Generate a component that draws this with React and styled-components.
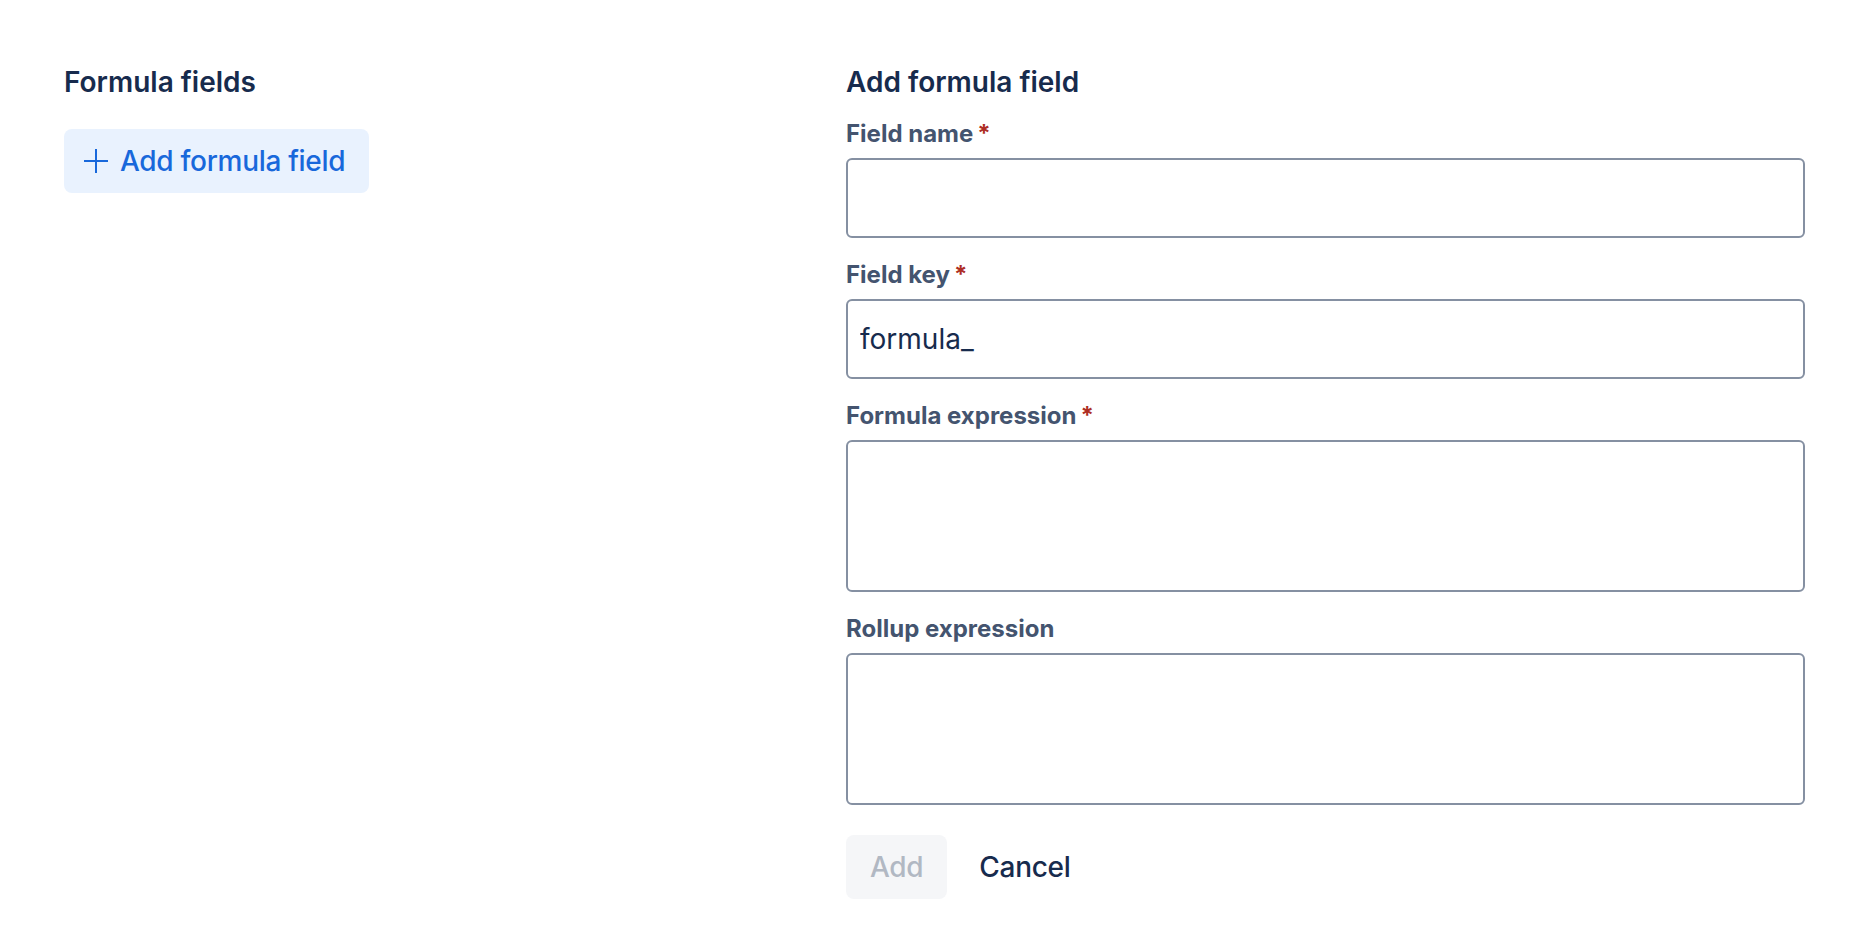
import React from "react";
import styled, { createGlobalStyle } from "styled-components";

const colors = {
	text: "#172B4D",
	label: "#44546F",
	required: "#AE2E24",
	border: "#8590A2",
	blue: "#1868DB",
	blueBg: "#E9F2FE",
	disabledBg: "#F5F6F8",
	disabledText: "#B1B8C3",
};

const GlobalStyle = createGlobalStyle`
	* {
		box-sizing: border-box;
	}
	html, body {
		margin: 0;
		padding: 0;
		background: #ffffff;
	}
	body {
		font-family: Inter, "Noto Sans", sans-serif;
		color: ${colors.text};
	}
`;

const Page = styled.div`
	display: grid;
	grid-template-columns: 782px 959px;
	padding: 62px 0 0 64px;
	min-height: 950px;
`;

const Column = styled.section`
	display: flex;
	flex-direction: column;
	align-items: flex-start;
`;

const Heading = styled.h2`
	margin: 0 0 ${(p) => p.$gap}px;
	font-size: 28px;
	line-height: 40px;
	font-weight: 600;
	color: ${colors.text};
`;

const Form = styled.form`
	display: flex;
	flex-direction: column;
	gap: 21px;
	width: 100%;
`;

const Field = styled.div`
	display: flex;
	flex-direction: column;
`;

const Label = styled.label`
	display: block;
	margin-bottom: 8px;
	font-size: 24px;
	line-height: 32px;
	font-weight: 700;
	color: ${colors.label};
`;

const Required = styled.span`
	color: ${colors.required};
	padding-left: 4px;
`;

const fieldBox = `
	width: 100%;
	border: 2px solid ${colors.border};
	border-radius: 6px;
	background: #ffffff;
	font-family: Inter, "Noto Sans", sans-serif;
	font-size: 28px;
	color: ${colors.text};
	outline: none;
`;

const Input = styled.input`
	${fieldBox}
	height: 80px;
	padding: 0 12px;
`;

const TextArea = styled.textarea`
	${fieldBox}
	height: 152px;
	padding: 12px;
	resize: none;
	display: block;
`;

const Button = styled.button`
	display: inline-flex;
	align-items: center;
	gap: 8px;
	height: 64px;
	padding: ${(p) => (p.$icon ? "0 24px 0 16px" : "0 24px")};
	border: none;
	border-radius: 8px;
	font-family: Inter, "Noto Sans", sans-serif;
	font-size: 28px;
	font-weight: 500;
	letter-spacing: -0.3px;
	cursor: pointer;
	background: ${(p) =>
		p.$variant === "selected"
			? colors.blueBg
			: p.$variant === "disabled"
				? colors.disabledBg
				: "transparent"};
	color: ${(p) =>
		p.$variant === "selected"
			? colors.blue
			: p.$variant === "disabled"
				? colors.disabledText
				: colors.text};
`;

const Actions = styled.div`
	display: flex;
	gap: 8px;
	margin-top: 9px;
`;

const PlusIcon = () => (
	<svg width="32" height="32" viewBox="0 0 32 32" fill="none">
		<path d="M16 4v24M4 16h24" stroke="currentColor" strokeWidth="2" />
	</svg>
);

const FormField = ({ label, required, children }) => (
	<Field>
		<Label>
			{label}
			{required && <Required>*</Required>}
		</Label>
		{children}
	</Field>
);

const App = () => (
	<>
		<GlobalStyle />
		<Page>
			<Column>
				<Heading $gap={27}>Formula fields</Heading>
				<Button $variant="selected" $icon>
					<PlusIcon />
					Add formula field
				</Button>
			</Column>
			<Column>
				<Heading $gap={16}>Add formula field</Heading>
				<Form onSubmit={(e) => e.preventDefault()}>
					<FormField label="Field name" required>
						<Input />
					</FormField>
					<FormField label="Field key" required>
						<Input defaultValue="formula_" />
					</FormField>
					<FormField label="Formula expression" required>
						<TextArea />
					</FormField>
					<FormField label="Rollup expression">
						<TextArea />
					</FormField>
					<Actions>
						<Button $variant="disabled" type="submit" disabled>
							Add
						</Button>
						<Button type="button">Cancel</Button>
					</Actions>
				</Form>
			</Column>
		</Page>
	</>
);

export default App;
